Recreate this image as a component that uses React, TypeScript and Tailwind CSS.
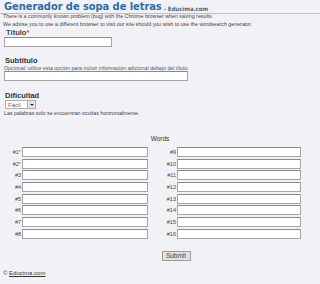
import React from "react";

const left = ["#1", "#2", "#3", "#4", "#5", "#6", "#7", "#8"];
const right = ["#9", "#10", "#11", "#12", "#13", "#14", "#15", "#16"];

function WordRow({ label, required }: { label: string; required?: boolean }) {
  return (
    <>
      <div className="flex h-[10px] items-center justify-end pr-[1px] text-[5.5px] text-[#444]">
        {label}
        {required && <span className="text-[#d33]">*</span>}
      </div>
      <div className="h-[10px] border border-[#a5a5a5] border-t-[#8a8a8a] bg-white" />
    </>
  );
}

export default function App() {
  return (
    <div className="h-[284px] w-[320px] overflow-hidden bg-[#f2f2f6] font-['Liberation_Sans',Arial,sans-serif] text-[#333]">
      <div className="flex h-[14px] items-end border-b border-[#a9c7d6] px-[4px] pb-[1px]">
        <h1 className="font-['DejaVu_Sans',sans-serif] text-[11px] leading-none font-bold tracking-[-0.05px] text-[#2b6ea5] [font-stretch:condensed]">
          Generador de sopa de letras
        </h1>
        <span className="ml-[2px] font-['DejaVu_Sans',sans-serif] text-[6px] leading-none font-bold text-[#4d6577] [font-stretch:condensed]">
          - Educima.com
        </span>
      </div>

      <div className="-mt-[2px] px-[3px] text-[5.3px] leading-[8px] text-[#444]">
        <p>There is a commonly known problem (bug) with the Chrome browser when saving results.</p>
        <p>We advise you to use a different browser to visit our site should you wish to use the wordsearch generator.</p>
      </div>

      <div className="px-[4px]">
        <label className="block pl-[2px] text-[7.5px] leading-[9px] font-bold text-[#444]">
          Título<span className="text-[#d33]">*</span>
        </label>
        <div className="h-[10px] w-[108px] border border-[#a5a5a5] border-t-[#8a8a8a] bg-white" />

        <label className="mt-[9px] block pl-[1px] text-[7.5px] leading-[9px] font-bold text-[#333]">
          Subtitulo
        </label>
        <p className="text-[5.3px] leading-[6px] text-[#555]">
          Opcional: utilice esta opción para incluir información adicional debajo del título.
        </p>
        <div className="h-[10px] w-[184px] border border-[#a5a5a5] border-t-[#8a8a8a] bg-white" />

        <label className="mt-[10px] block pl-[1px] text-[7.5px] leading-[9px] font-bold text-[#333]">
          Dificultad
        </label>
        <div className="ml-[1px] flex h-[9px] w-[31px] items-stretch border border-[#b0b0b0] bg-white">
          <span className="flex flex-1 items-center pl-[2px] text-[6px] leading-none text-[#666]">Fácil</span>
          <span className="flex w-[8px] items-center justify-center border-l border-[#b0b0b0] bg-[#e4e4e4]">
            <span className="h-0 w-0 border-x-[2px] border-t-[2px] border-x-transparent border-t-[#333]" />
          </span>
        </div>
        <p className="mt-[1px] text-[5.3px] leading-[6px] text-[#444]">
          Las palabras solo se encuentran ocultas horizontalmente.
        </p>
      </div>

      <div className="mt-[19px] text-center text-[6.5px] leading-[8px] text-[#333]">Words</div>

      <div className="mt-[4px] flex pl-[8px]">
        <div className="grid w-[140px] grid-cols-[14px_126px] gap-y-[1.7px]">
          {left.map((l, i) => (
            <WordRow key={l} label={l} required={i < 2} />
          ))}
        </div>
        <div className="ml-[15px] grid w-[138px] grid-cols-[14px_124px] gap-y-[1.7px]">
          {right.map((l) => (
            <WordRow key={l} label={l} />
          ))}
        </div>
      </div>

      <div className="mt-[12px] flex justify-center pl-[32px]">
        <button className="h-[10px] w-[29px] border border-[#9a9a9a] bg-[#e2e2e2] text-[6.5px] leading-none text-[#444]">
          Submit
        </button>
      </div>

      <div className="mt-[8px] px-[3px] text-[6px] leading-[8px] text-[#333]">
        © <a className="underline">Educima.com</a>
      </div>
    </div>
  );
}
